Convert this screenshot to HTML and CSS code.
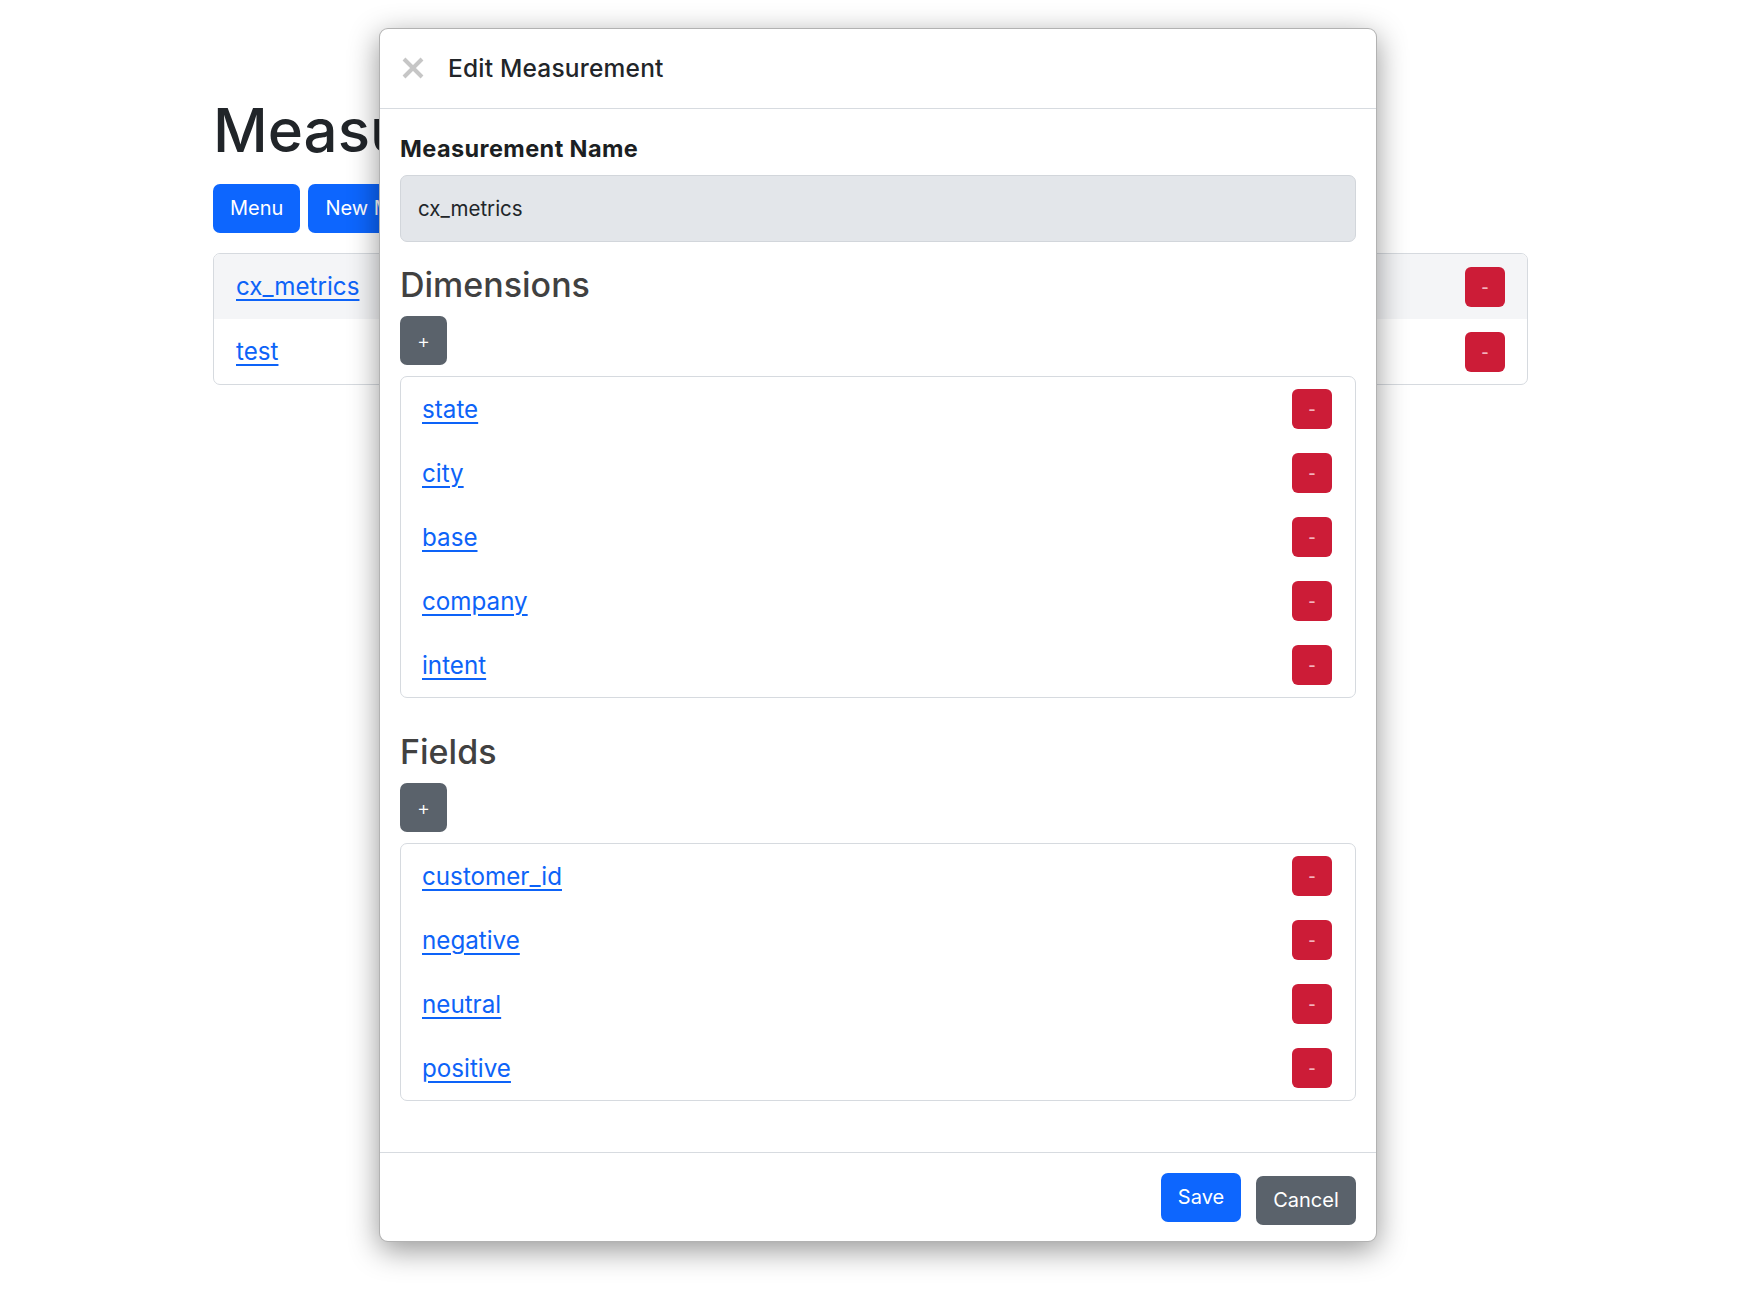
FILE: index.html
```html
<!DOCTYPE html>
<html lang="en">
<head>
<meta charset="utf-8">
<title>Measurements</title>
<link rel="stylesheet" href="styles.css">
</head>
<body>
<div class="page">
  <h1 class="page-title">Measurements</h1>
  <div class="toolbar">
    <button class="btn btn-primary">Menu</button>
    <button class="btn btn-primary">New Measurement</button>
  </div>
  <ul class="list">
    <li class="list-item list-item-active"><a href="#" class="link">cx_metrics</a><button class="btn-del">-</button></li>
    <li class="list-item"><a href="#" class="link">test</a><button class="btn-del">-</button></li>
  </ul>
</div>

<div class="modal">
  <div class="modal-header">
    <svg class="close-icon" width="22" height="22" viewBox="0 0 22 22" aria-hidden="true">
      <path d="M2 2 L20 20 M20 2 L2 20" stroke="#c6c6c6" stroke-width="4" stroke-linecap="butt" fill="none"/>
    </svg>
    <h5 class="modal-title">Edit Measurement</h5>
  </div>
  <div class="modal-body">
    <label class="field-label">Measurement Name</label>
    <div class="input">cx_metrics</div>

    <h3 class="section-title">Dimensions</h3>
    <button class="btn-add">+</button>
    <ul class="list modal-list">
      <li class="list-item"><a href="#" class="link">state</a><button class="btn-del">-</button></li>
      <li class="list-item"><a href="#" class="link">city</a><button class="btn-del">-</button></li>
      <li class="list-item"><a href="#" class="link">base</a><button class="btn-del">-</button></li>
      <li class="list-item"><a href="#" class="link">company</a><button class="btn-del">-</button></li>
      <li class="list-item"><a href="#" class="link">intent</a><button class="btn-del">-</button></li>
    </ul>

    <h3 class="section-title section-gap">Fields</h3>
    <button class="btn-add">+</button>
    <ul class="list modal-list">
      <li class="list-item"><a href="#" class="link">customer_id</a><button class="btn-del">-</button></li>
      <li class="list-item"><a href="#" class="link">negative</a><button class="btn-del">-</button></li>
      <li class="list-item"><a href="#" class="link">neutral</a><button class="btn-del">-</button></li>
      <li class="list-item"><a href="#" class="link">positive</a><button class="btn-del">-</button></li>
    </ul>
  </div>
  <div class="modal-footer">
    <button class="btn btn-primary btn-save">Save</button>
    <button class="btn btn-secondary btn-cancel">Cancel</button>
  </div>
</div>
</body>
</html>
```

FILE: styles.css
```css
* { box-sizing: border-box; }

html, body {
  margin: 0;
  padding: 0;
  background: #ffffff;
  font-family: Inter, "Noto Sans", "Liberation Sans", sans-serif;
  color: #212529;
}

.page {
  width: 1316px;
  margin: 0 auto;
  padding-top: 94px;
  overflow: hidden;
}

.page-title {
  margin: 0 0 18px 0;
  font-size: 60px;
  line-height: 72px;
  font-weight: 500;
  color: #212529;
  white-space: nowrap;
}

.toolbar {
  display: flex;
  gap: 8px;
  margin-bottom: 20px;
}

.btn {
  height: 49px;
  padding: 0 17px;
  border: none;
  border-radius: 7px;
  font-family: inherit;
  font-size: 20px;
  color: #ffffff;
  line-height: 49px;
  white-space: nowrap;
}

.btn-primary { background: #0d66fe; }
.btn-secondary { background: #5a626b; }

.list {
  list-style: none;
  margin: 0;
  padding: 0;
  border: 1px solid #d6dadf;
  border-radius: 7px;
  overflow: hidden;
}

.page .list { width: 1315px; }

.list-item {
  display: flex;
  align-items: center;
  justify-content: space-between;
  height: 65px;
  padding: 0 22px 0 22px;
}

.list-item-active { background: #f4f5f7; }

.link {
  font-size: 24.2px;
  color: #0d63f8;
  text-decoration: underline;
  text-underline-offset: 4px;
  text-decoration-thickness: 2px;
}

.btn-del {
  width: 40px;
  height: 40px;
  border: none;
  border-radius: 6px;
  background: #cc1c37;
  color: #f3b3bd;
  font-family: inherit;
  font-size: 16px;
  font-weight: 600;
  padding: 0;
  line-height: 40px;
}

/* Modal */
.modal {
  position: absolute;
  left: 379px;
  top: 28px;
  width: 998px;
  background: #ffffff;
  border: 1px solid rgba(0, 0, 0, 0.3);
  border-radius: 9px;
  box-shadow: 0 8px 30px rgba(0, 0, 0, 0.42);
}

.modal-header {
  display: flex;
  align-items: center;
  gap: 24px;
  height: 80px;
  padding: 0 22px 1px 22px;
  border-bottom: 1px solid #d7dbe0;
}

.close-icon { flex: none; }

.modal-title {
  margin: 0;
  font-size: 24.5px;
  font-weight: 500;
  letter-spacing: 0.2px;
  color: #222529;
}

.modal-body {
  padding: 25px 20px 51px 20px;
}

.field-label {
  display: block;
  font-size: 23.5px;
  line-height: 29px;
  font-weight: 700;
  letter-spacing: 0.4px;
  color: #1c1f23;
  margin-bottom: 12px;
}

.input {
  height: 67px;
  border: 1px solid #d2d6db;
  border-radius: 7px;
  background: #e3e6ea;
  padding: 0 17px;
  display: flex;
  align-items: center;
  font-size: 20.5px;
  color: #212529;
}

.section-title {
  margin: 22px 0 11px 0;
  font-size: 34px;
  line-height: 41px;
  font-weight: 500;
  color: #414141;
}

.section-gap { margin-top: 33px; }

.btn-add {
  display: block;
  width: 47px;
  height: 49px;
  border: none;
  border-radius: 7px;
  background: #5a626b;
  color: #ffffff;
  font-family: inherit;
  font-size: 20px;
  font-weight: 300;
  padding: 0;
  margin-bottom: 11px;
}

.modal-list .list-item {
  height: 64px;
  padding: 0 23px 0 21px;
}

.modal-footer {
  display: flex;
  justify-content: flex-end;
  align-items: flex-start;
  gap: 15px;
  height: 89px;
  padding: 20px 20px 0 20px;
  border-top: 1px solid #d7dbe0;
}

.btn-save {
  width: 80px;
  padding: 0;
}

.btn-cancel {
  width: 100px;
  padding: 0;
  margin-top: 3px;
}
```
